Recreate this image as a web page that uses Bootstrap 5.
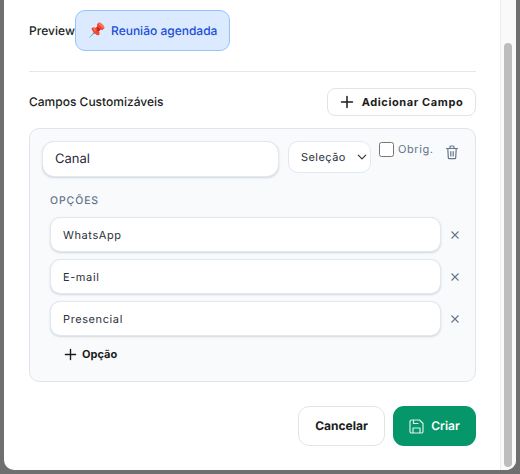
<!doctype html>
<html lang="pt"><head><meta charset="utf-8">
<link href="https://cdn.jsdelivr.net/npm/bootstrap@5.3.0/dist/css/bootstrap.min.css" rel="stylesheet">
<style>
html,body{height:474px;overflow:hidden}
body{background:#6f6f6f;font-family:Inter,"Liberation Sans",sans-serif;color:#1a1d21;text-rendering:geometricPrecision}
input,select,button{text-rendering:geometricPrecision}
.sheet{width:512px;height:470px;margin-left:4px;background:#fff;border-radius:0 0 10px 10px;padding:10px 40px 0 25px;position:relative;overflow:hidden}
.pv-label{font-size:12px;font-weight:500;line-height:20px;letter-spacing:.05px}
.pv-chip{width:155px;height:41px;background:#dbeafe;border:1px solid #93c5fd;border-radius:10px;color:#1d4ed8;font-size:12px;font-weight:500;padding-left:12px;gap:8px}
.pv-pin{font-size:14px;font-family:"DejaVu Sans",sans-serif;width:15px;padding-top:2px}
.sep{border-top:1px solid #e2e8f0;margin:20px 0 16px;opacity:1}
.title-row{height:28px;margin-bottom:12px}
.sec-title{font-size:12px;font-weight:500}
.add-btn{width:149px;height:28px;border:1px solid #dfe8dc;border-radius:8px;background:#fff;font-size:11px;font-weight:700;letter-spacing:.6px;color:#1a1d21;padding:0;gap:8px}
.field-box{height:254px;background:#f8fafc;border:1px solid #dfe5ef;border-radius:10px;padding:12px 12px 0}
.name-in{width:237px;height:36px;border:1px solid #e2e8f0;border-radius:12px;font-size:13px;color:#1f2937;padding:0 12px;box-shadow:0 1px 2px rgba(100,116,139,.25)}
.type-sel{width:83px;height:32px;border:1px solid #e2e8f0;border-radius:10px;font-size:11px;letter-spacing:.45px;color:#2b3038;padding:0 0 0 12px;background-position:right 2px center;background-size:12px 10px;margin-left:9px}
.req-wrap{margin-left:8px;gap:4px;height:16px}
.req-box{width:15px;height:15px;margin:0;border:1px solid #777;border-radius:3px;background:#fff}
.req-txt{font-size:11px;color:#64748b;letter-spacing:.6px;line-height:14px}
.ico-btn{background:none;border:0;padding:0;color:#64748b;line-height:0}
.del-btn{margin-top:4px;margin-right:4px}
.opts{margin:17px 0 0 8px}
.opt-head{font-size:10.5px;font-weight:500;letter-spacing:.9px;color:#64748b;line-height:14px;margin-bottom:9px}
.opt-row{margin-bottom:7px;height:35px}
.opt-in{width:391px;height:35px;border:1px solid #e2e8f0;border-radius:10px;font-size:11px;letter-spacing:.6px;color:#2b3038;padding:0 12px;box-shadow:0 1px 2px rgba(100,116,139,.25)}
.x-btn{margin-right:3px}
.add-opt{background:none;border:0;padding:0;margin:9px 0 0 14px;font-size:11px;font-weight:700;color:#1a1d21;gap:5px;line-height:18px}
.foot{margin-top:24px;gap:8px}
.cancel-btn{width:87px;height:40px;border:1px solid #dfe8dc;border-radius:11px;background:#fff;font-size:12px;font-weight:700;color:#1a1d21;padding:0}
.save-btn{width:83px;height:40px;border:0;border-radius:11px;background:#059669;color:#fff;font-size:12px;font-weight:600;padding:0;gap:7px}
.save-btn:hover{background:#059669;color:#fff}
.sb-track{position:absolute;right:0;top:0;bottom:0;width:16px;border-left:1px solid #ececec;background:#fafafa}
.sb-thumb{position:absolute;left:3px;top:43px;width:8px;height:424px;border-radius:4px;background:#bdbdbd}
</style></head>
<body>
<div class="sheet">
<div class="d-flex align-items-center"><span class="pv-label">Preview</span>
<div class="pv-chip d-flex align-items-center"><span class="pv-pin">📌</span><span>Reunião agendada</span></div></div>
<hr class="sep">
<div class="title-row d-flex justify-content-between align-items-center"><span class="sec-title">Campos Customizáveis</span>
<button class="btn add-btn d-flex align-items-center justify-content-center"><svg width="14" height="14" viewBox="0 0 14 14" fill="none" stroke="#1a1d21" stroke-width="1.5" stroke-linecap="round"><path d="M7 1.500v11M1.500 7h11"/></svg>Adicionar Campo</button></div>
<div class="field-box">
<div class="d-flex align-items-start">
<input class="form-control name-in" value="Canal">
<select class="form-select type-sel"><option>Seleção</option></select>
<label class="req-wrap d-flex align-items-center"><input type="checkbox" class="req-box"><span class="req-txt">Obrig.</span></label>
<button class="ico-btn del-btn ms-auto" aria-label="Excluir"><svg width="14" height="15" viewBox="0 0 14 15" fill="none" stroke="#64748b" stroke-width="1.2" stroke-linecap="round" stroke-linejoin="round"><path d="M1.500 3.500h11M5 3.500V2a1 1 0 0 1 1-1h2a1 1 0 0 1 1 1v1.500M2.800 3.500l.5 9.200a1 1 0 0 0 1 1h5.400a1 1 0 0 0 1-1l.5-9.200M5.800 6.500v4.500M8.200 6.500v4.500"/></svg></button>
</div>
<div class="opts">
<div class="opt-head">OPÇÕES</div>
<div class="opt-row d-flex align-items-center"><input class="form-control opt-in" value="WhatsApp"><button class="ico-btn x-btn ms-auto" aria-label="Remover"><svg width="10" height="10" viewBox="0 0 10 10" stroke="#64748b" stroke-width="1.1"><path d="M1.500 1.500l7 7M8.500 1.500l-7 7"/></svg></button></div>
<div class="opt-row d-flex align-items-center"><input class="form-control opt-in" value="E-mail"><button class="ico-btn x-btn ms-auto" aria-label="Remover"><svg width="10" height="10" viewBox="0 0 10 10" stroke="#64748b" stroke-width="1.1"><path d="M1.500 1.500l7 7M8.500 1.500l-7 7"/></svg></button></div>
<div class="opt-row d-flex align-items-center"><input class="form-control opt-in" value="Presencial"><button class="ico-btn x-btn ms-auto" aria-label="Remover"><svg width="10" height="10" viewBox="0 0 10 10" stroke="#64748b" stroke-width="1.1"><path d="M1.500 1.500l7 7M8.500 1.500l-7 7"/></svg></button></div>
<button class="add-opt d-flex align-items-center"><svg width="13" height="13" viewBox="0 0 14 14" fill="none" stroke="#1a1d21" stroke-width="1.5" stroke-linecap="round"><path d="M7 1.500v11M1.500 7h11"/></svg>Opção</button>
</div>
</div>
<div class="foot d-flex justify-content-end">
<button class="btn cancel-btn">Cancelar</button>
<button class="btn save-btn d-flex align-items-center justify-content-center"><svg width="15" height="15" viewBox="0 0 15 15" fill="none" stroke="#fff" stroke-opacity=".85" stroke-width="1.2" stroke-linejoin="round"><path d="M2.500 1h8l3.500 3.500v8a1.500 1.500 0 0 1-1.500 1.500h-10A1.500 1.500 0 0 1 1 12.500v-10A1.500 1.500 0 0 1 2.500 1z"/><path d="M4 14V9h7v5M4.500 1v3.500h5"/></svg>Criar</button>
</div>
<div class="sb-track"><div class="sb-thumb"></div></div>
</div>
<script src="https://cdn.jsdelivr.net/npm/bootstrap@5.3.0/dist/js/bootstrap.bundle.min.js"></script>
</body></html>
